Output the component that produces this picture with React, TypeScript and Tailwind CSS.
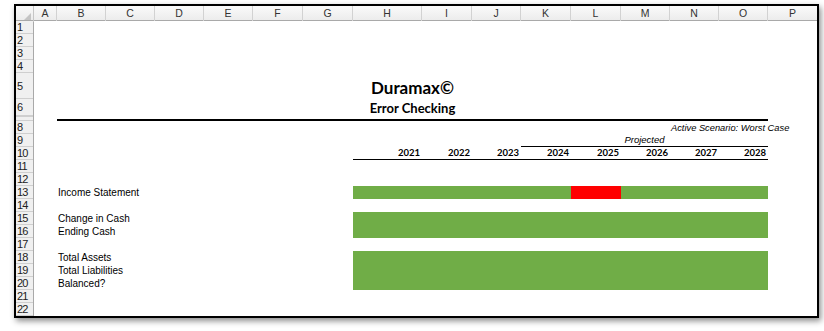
import React from "react";

const letters = ["A", "B", "C", "D", "E", "F", "G", "H", "I", "J", "K", "L", "M", "N", "O", "P"];

const rowNums = Array.from({ length: 22 }, (_, i) => i + 1);

function rowHeight(n: number) {
  if (n === 5) return "h-[26px]";
  if (n === 6) return "h-[17px]";
  if (n === 7) return "h-[5px]";
  return "h-[13px]";
}

const years = [
  { y: "2021", col: "col-start-8" },
  { y: "2022", col: "col-start-9" },
  { y: "2023", col: "col-start-10" },
  { y: "2024", col: "col-start-11" },
  { y: "2025", col: "col-start-12" },
  { y: "2026", col: "col-start-13" },
  { y: "2027", col: "col-start-14" },
  { y: "2028", col: "col-start-15" },
];

const labels = [
  { text: "Income Statement", row: "row-start-13" },
  { text: "Change in Cash", row: "row-start-15" },
  { text: "Ending Cash", row: "row-start-16" },
  { text: "Total Assets", row: "row-start-18" },
  { text: "Total Liabilities", row: "row-start-19" },
  { text: "Balanced?", row: "row-start-20" },
];

const calibri = "font-['Lato','Open_Sans',sans-serif]";
const arial = "font-['Liberation_Sans',Arial,sans-serif]";

function ColumnHeader() {
  return (
    <div className="grid grid-cols-[18px_23px_49px_49px_49px_49px_50px_50px_69px_50px_49px_50px_50px_49px_49px_49px_49px] h-[15px] bg-gradient-to-b from-[#fafafa] to-[#ececec] border-b border-[#a9a9a9]">
      <div className="relative border-r border-[#c6c6c6]">
        <svg className="absolute right-[2px] bottom-[2px]" width="7" height="7" viewBox="0 0 7 7">
          <polygon points="7,0 7,7 0,7" fill="#c4c4c4" />
        </svg>
      </div>
      {letters.map((l) => (
        <div
          key={l}
          className={`${arial} flex items-center justify-center text-[10.5px] text-[#333] border-r border-[#d2d2d2] last:border-r-0`}
        >
          {l}
        </div>
      ))}
    </div>
  );
}

function RowHeader() {
  return (
    <div className="flex flex-col w-[18px] bg-[#f0f0f0] border-r border-[#a9a9a9]">
      {rowNums.map((n) => (
        <div
          key={n}
          className={`${rowHeight(n)} ${arial} flex items-center pl-[1px] text-[11px] leading-[12px] tracking-[-0.9px] text-[#222] border-b border-[#cfcfcf] ${n === 7 ? "border-t" : ""}`}
        >
          {n === 7 ? "" : n}
        </div>
      ))}
    </div>
  );
}

function Sheet() {
  return (
    <div className="grid grid-cols-[23px_49px_49px_49px_49px_50px_50px_69px_50px_49px_50px_50px_49px_49px_49px_48px] grid-rows-[repeat(4,13px)_26px_17px_5px_repeat(15,13px)] bg-white text-black">
      {/* title block */}
      <div className={`${calibri} col-start-8 col-span-2 row-start-5 flex items-end justify-center pb-[1px] text-[17px] leading-[20px] font-bold`}>
        Duramax©
      </div>
      <div className={`${calibri} col-start-8 col-span-2 row-start-6 flex items-center justify-center text-[13px] leading-[16px] font-bold`}>
        Error Checking
      </div>
      <div className="col-start-2 col-span-14 row-start-7 border-b-2 border-black" />

      <div className={`${arial} col-start-14 row-start-8 flex items-end whitespace-nowrap pl-[1px] text-[9.3px] leading-[12px] italic`}>
        Active Scenario: Worst Case
      </div>
      <div className={`${arial} col-start-11 col-span-5 row-start-9 flex items-end justify-center text-[9.5px] leading-[12px] italic border-b border-black`}>
        Projected
      </div>
      {years.map((y) => (
        <div
          key={y.y}
          className={`${calibri} ${y.col} row-start-10 flex items-end justify-end pr-[2px] text-[9.5px] leading-[12px] font-bold border-b border-black`}
        >
          {y.y}
        </div>
      ))}

      {labels.map((l) => (
        <div
          key={l.text}
          className={`${arial} col-start-2 ${l.row} flex items-end whitespace-nowrap pl-[1px] text-[10px] leading-[12px]`}
        >
          {l.text}
        </div>
      ))}

      {/* check results */}
      <div className="col-start-8 col-span-4 row-start-13 bg-[#70ad47]" />
      <div className="col-start-12 row-start-13 bg-[#ff0000]" />
      <div className="col-start-13 col-span-3 row-start-13 bg-[#70ad47]" />
      <div className="col-start-8 col-span-8 row-start-15 row-span-2 bg-[#70ad47]" />
      <div className="col-start-8 col-span-8 row-start-18 row-span-3 bg-[#70ad47]" />
    </div>
  );
}

export default function App() {
  return (
    <div className="min-h-screen bg-white pl-[14px] pt-[4px]">
      <div className="w-fit border-2 border-black shadow-[2px_3px_6px_rgba(0,0,0,0.45)]">
        <ColumnHeader />
        <div className="flex">
          <RowHeader />
          <Sheet />
        </div>
      </div>
    </div>
  );
}
